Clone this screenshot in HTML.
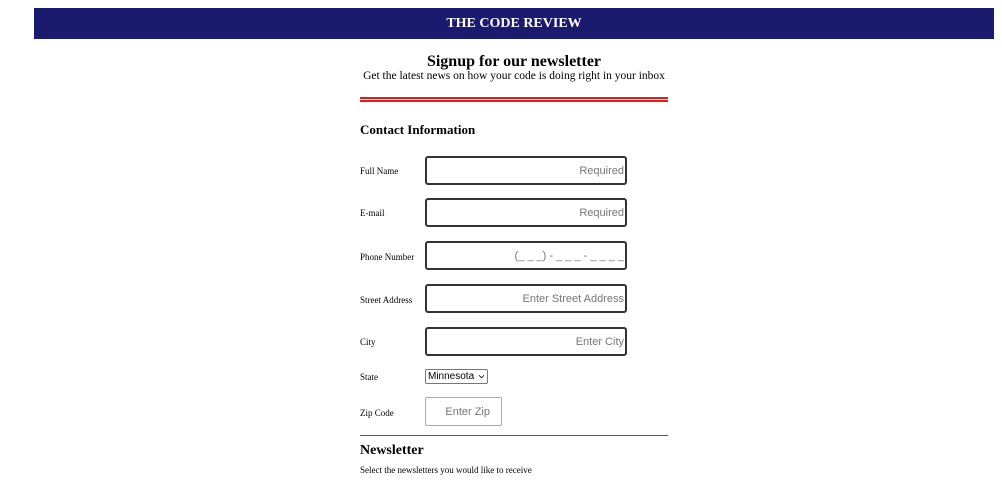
<!DOCTYPE html>
<html><head><style>
body{margin:0;width:1002px;height:497px;background:#fff;font-family:"Liberation Serif",serif;position:relative;overflow:hidden;color:#000}
.hdr{position:absolute;left:34px;top:8px;width:960px;height:31px;background:#1a1a6e;color:#fff;font-weight:bold;font-size:14px;text-align:center;line-height:31px}
.a{position:absolute}
.lbl{position:absolute;left:360px;font-size:9px}
.in{position:absolute;left:425px;width:197px;height:25px;border:2px solid #333;border-radius:3px;font-family:"Liberation Sans",sans-serif;font-size:11px;color:#777;text-align:right;line-height:27px;padding-right:1px;white-space:nowrap;overflow:hidden}
</style></head><body>
<div class="hdr">THE CODE REVIEW</div>
<div class="a" style="left:340px;width:348px;top:53px;text-align:center;font-weight:bold;font-size:16px">Signup for our newsletter</div>
<div class="a" style="left:340px;width:348px;top:70px;text-align:center;font-size:11.5px">Get the latest news on how your code is doing right in your inbox</div>
<div class="a" style="left:360px;top:97px;width:308px;height:2px;background:#e8191f"></div>
<div class="a" style="left:360px;top:100px;width:308px;height:2px;background:#e8191f"></div>
<div class="a" style="left:360px;top:122px;font-weight:bold;font-size:13px">Contact Information</div>
<div class="lbl" style="top:166px">Full Name</div><div class="in" style="top:156px">Required</div>
<div class="lbl" style="top:208px">E-mail</div><div class="in" style="top:198px">Required</div>
<div class="lbl" style="top:252px">Phone Number</div><div class="in" style="top:241px">(_ _ _) - _ _ _ - _ _ _ _</div>
<div class="lbl" style="top:295px">Street Address</div><div class="in" style="top:284px">Enter Street Address</div>
<div class="lbl" style="top:337px">City</div><div class="in" style="top:327px">Enter City</div>
<div class="lbl" style="top:372px">State</div>
<div class="a" style="left:425px;top:369px;width:59px;height:13px;border:1px solid #777;border-radius:2px;font-family:'Liberation Sans',sans-serif;font-size:10px;line-height:13px;padding-left:2px;white-space:nowrap;overflow:hidden">Minnesota<svg width="7" height="5" viewBox="0 0 8 6" style="position:absolute;right:2px;top:4px"><path d="M1 1.5L4 4.5L7 1.5" stroke="#000" fill="none" stroke-width="1"/></svg></div>
<div class="lbl" style="top:408px">Zip Code</div>
<div class="a" style="left:425px;top:397px;height:27px;border:1px solid #aaa;border-radius:2px;font-family:'Liberation Sans',sans-serif;font-size:11px;color:#777;line-height:28px;text-align:right;padding-right:11px;width:64px">Enter Zip</div>
<div class="a" style="left:360px;top:435px;width:308px;height:0;border-top:1.5px solid #e8191f"></div>
<div class="a" style="left:360px;top:443px;font-weight:bold;font-size:14px">Newsletter</div>
<div class="a" style="left:360px;top:465px;font-size:9px">Select the newsletters you would like to receive</div>
</body></html>
